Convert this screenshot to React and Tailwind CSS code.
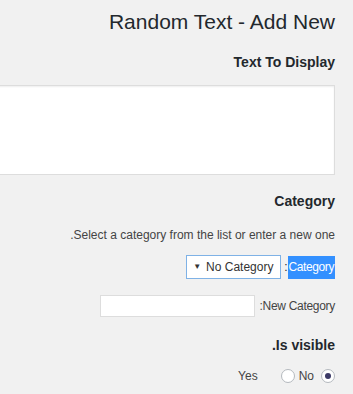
import { useState } from 'react';

const App = () => {
  const [visible, setVisible] = useState('no');

  return (
    <div
      className="w-[353px] h-[394px] overflow-hidden bg-[#f1f1f1] text-[#23282d]"
      style={{ fontFamily: '"Liberation Sans", Arial, sans-serif' }}
    >
      <div className="flex flex-col items-end pr-[18px]">
        <h1 className="mt-[10px] text-[21px] leading-[24px] font-normal">
          Random Text - Add New
        </h1>

        <h2 className="mt-[19px] text-[14px] leading-[18px] font-bold">
          Text To Display
        </h2>
        <textarea className="mt-[14px] w-[420px] h-[90px] shrink-0 bg-white border border-[#dddddd] shadow-[inset_0_1px_2px_rgba(0,0,0,0.07)] resize-none outline-none" />

        <h2 className="mt-[17px] text-[14px] leading-[18px] font-bold">
          Category
        </h2>
        <p className="mt-[17px] text-[12px] leading-[16px] text-[#444]">
          .Select a category from the list or enter a new one
        </p>

        <div className="mt-[12px] flex items-center">
          <div className="w-[95px] h-[24px] flex items-center gap-[5px] pl-[6px] bg-white border border-[#7fb2e6] text-[12px] text-[#333]">
            <span className="text-[8px] leading-none">▼</span>
            <span>No Category</span>
          </div>
          <span className="ml-[3px] text-[12px]">:</span>
          <span className="h-[23px] px-[1px] flex items-center bg-[#3390ff] text-white text-[12px] tracking-[-0.4px]">
            Category
          </span>
        </div>

        <div className="mt-[16px] flex items-center">
          <input className="w-[155px] h-[22px] bg-white border border-[#dddddd] outline-none" />
          <span className="ml-[5px] text-[12px] tracking-[-0.3px] text-[#444]">:New Category</span>
        </div>

        <h2 className="mt-[19px] text-[14px] leading-[18px] font-bold">
          .Is visible
        </h2>

        <div className="mt-[13px] flex items-center text-[12px] text-[#444]">
          <span>Yes</span>
          <button
            onClick={() => setVisible('yes')}
            className="ml-[23px] w-[14px] h-[14px] rounded-full bg-white border border-[#b4b9be] flex items-center justify-center"
          >
            {visible === 'yes' && <span className="w-[6px] h-[6px] rounded-full bg-[#3c3a66]" />}
          </button>
          <span className="ml-[4px]">No</span>
          <button
            onClick={() => setVisible('no')}
            className="ml-[7px] w-[14px] h-[14px] rounded-full bg-white border border-[#b4b9be] flex items-center justify-center"
          >
            {visible === 'no' && <span className="w-[6px] h-[6px] rounded-full bg-[#3c3a66]" />}
          </button>
        </div>
      </div>
    </div>
  );
};

export default App;
